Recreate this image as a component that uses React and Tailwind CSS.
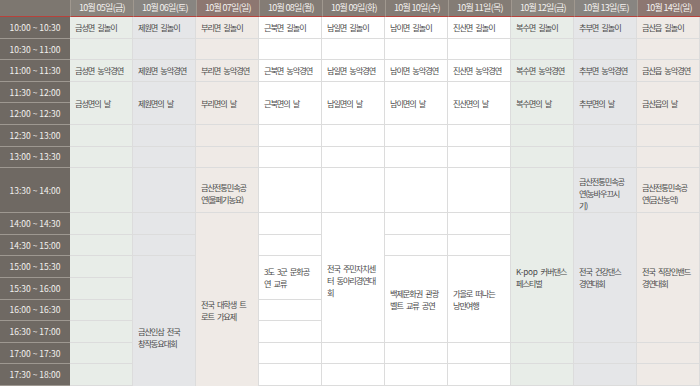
import React from 'react';

const TIMES = [
  '10:00 ~ 10:30', '10:30 ~ 11:00', '11:00 ~ 11:30', '11:30 ~ 12:00', '12:00 ~ 12:30',
  '12:30 ~ 13:00', '13:00 ~ 13:30', '13:30 ~ 14:00', '14:00 ~ 14:30', '14:30 ~ 15:00',
  '15:00 ~ 15:30', '15:30 ~ 16:00', '16:00 ~ 16:30', '16:30 ~ 17:00', '17:00 ~ 17:30',
  '17:30 ~ 18:00', '', '', '',
];

const KPOP = (
  <>
    <span className="tracking-[-0.3px]">K-pop</span> 커버댄스
  </>
);

const DAYS = [
  { label: '10월 05일(금)', kind: 'fri', name: '금성면', extra: {} },
  { label: '10월 06일(토)', kind: 'sat', name: '제원면', extra: { 10: [8, ['금산인삼 전국', '창작동요대회'], 'pb-[10px]'] } },
  { label: '10월 07일(일)', kind: 'sun', name: '부리면', extra: { 7: [1, ['금산전통민속공', '연(물페기농요)'], 'pt-[6px]'], 8: [9, ['전국 대학생 트', '로트 가요제'], ''] } },
  { label: '10월 08일(월)', kind: 'wd', name: '근북면', extra: { 10: [2, ['3도 3군 문화공', '연 교류'], ''] } },
  { label: '10월 09일(화)', kind: 'wd', name: '남일면', extra: { 8: [6, ['전국 주민자치센', '터 동아리경연대', '회'], 'pt-[6px]'] } },
  { label: '10월 10일(수)', kind: 'wd', name: '남이면', extra: { 10: [4, ['백제문화권 관광', '벨트 교류 공연'], ''] } },
  { label: '10월 11일(목)', kind: 'wd', name: '진산면', extra: { 10: [4, ['가을로 떠나는', '낭만여행'], ''] } },
  { label: '10월 12일(금)', kind: 'fri', name: '복수면', extra: { 8: [6, [KPOP, '페스티벌'], ''] } },
  { label: '10월 13일(토)', kind: 'sat', name: '추부면', extra: { 7: [1, ['금산전통민속공', '연(농바우끄시', '기)'], 'pt-[6px]'], 8: [6, ['전국 건강댄스', '경연대회'], ''] } },
  { label: '10월 14일(일)', kind: 'sun', name: '금산읍', extra: { 7: [1, ['금산전통민속공', '연(금산농악)'], 'pt-[6px]'], 8: [6, ['전국 직장인밴드', '경연대회'], ''] } },
];

const SPAN = { 1: '', 2: 'row-span-2', 4: 'row-span-4', 6: 'row-span-6', 8: 'row-span-8', 9: 'row-span-9' };
const BG = { fri: 'bg-[#e8ede8]', sat: 'bg-[#e5e6e8]', sun: 'bg-[#efeae6]', wd: 'bg-white' };
const HEAD = { fri: 'bg-[#8a857e]', sat: 'bg-[#888581]', sun: 'bg-[#8d7771]', wd: 'bg-[#847c75]' };

function buildColumns() {
  return DAYS.map((d) => {
    const cells = {
      0: [1, [`${d.name} 길놀이`], ''],
      2: [1, [`${d.name} 농악경연`], ''],
      3: [2, [`${d.name}의 날`], ''],
      ...d.extra,
    };
    const starts = {};
    const covered = new Set();
    for (let r = 0; r < TIMES.length; r++) {
      if (covered.has(r)) continue;
      const c = cells[r] || [1, [], ''];
      starts[r] = c;
      for (let k = 1; k < c[0]; k++) covered.add(r + k);
    }
    return { ...d, starts };
  });
}

export default function App() {
  const cols = buildColumns();
  const items = [];
  items.push(
    <div key="h-corner" className="bg-[#7d7770] border-b border-[#b8423b]" />
  );
  cols.forEach((c, i) => {
    items.push(
      <div
        key={`h-${i}`}
        className={`${HEAD[c.kind]} border-b border-[#b8423b] border-l border-l-[#a0988f] flex items-center justify-center text-[9px] tracking-[-0.7px] text-[#f4f2f0] whitespace-nowrap`}
      >
        {c.label}
      </div>
    );
  });
  TIMES.forEach((t, r) => {
    items.push(
      <div
        key={`t-${r}`}
        className="bg-[#6f6963] border-b border-[#9e9891] flex items-center justify-center text-[8.5px] text-[#f3f1ef] whitespace-nowrap"
      >
        {t}
      </div>
    );
    cols.forEach((c, i) => {
      const s = c.starts[r];
      if (!s) return;
      const [span, lines, extra] = s;
      items.push(
        <div
          key={`c-${r}-${i}`}
          className={`${BG[c.kind]} ${SPAN[span]} ${extra} border-b border-r border-[#dcdcdc] flex flex-col justify-center pl-[5px] text-[8.2px] leading-[12px] tracking-[-1.1px] [word-spacing:2.3px] text-[#4a4a4a] whitespace-nowrap overflow-hidden`}
        >
          {lines.map((l, k) => (
            <span key={k}>{l}</span>
          ))}
        </div>
      );
    });
  });

  return (
    <div className="w-[700px] h-[386px] overflow-hidden bg-white font-['Noto_Sans_CJK_KR',sans-serif]">
      <div className="grid grid-cols-[70px_repeat(10,63px)] grid-rows-[17px_repeat(7,21.6px)_45px_repeat(11,21.6px)]">
        {items}
      </div>
    </div>
  );
}
